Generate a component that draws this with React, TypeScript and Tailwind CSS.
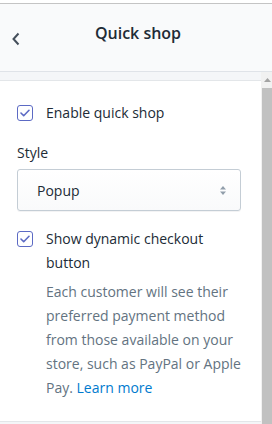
import { useState } from 'react';

const Check = ({ checked, onClick }: { checked: boolean; onClick: () => void }) => (
  <button
    onClick={onClick}
    className="w-4 h-4 shrink-0 rounded-[3px] border border-[#5c6ac4] bg-white flex items-center justify-center"
  >
    {checked && (
      <svg width="10" height="8" viewBox="0 0 10 8" fill="none">
        <path d="M1 4l2.7 2.7L9 1.3" stroke="#5c6ac4" strokeWidth="1.6" strokeLinecap="round" strokeLinejoin="round" />
      </svg>
    )}
  </button>
);

const App = () => {
  const [quickShop, setQuickShop] = useState(true);
  const [dynamicCheckout, setDynamicCheckout] = useState(true);
  const [estilo, setEstilo] = useState('Popup');

  return (
    <div className="w-[272px] h-[424px] overflow-hidden bg-[#f4f6f8] flex flex-col font-['Open_Sans',sans-serif] text-[#212b36]">
      {/* Cabecera */}
      <div className="h-[3px] bg-white" />
      <div className="h-[69px] shrink-0 bg-[#f9fafb] border-t border-[#c4c4c4] border-b border-b-[#dfe3e8] flex items-center relative">
        <button className="absolute left-[11px] top-[28px] text-[#454f5b]">
          <svg width="10" height="14" viewBox="0 0 10 14" fill="none">
            <path d="M7.5 1.5L2.5 7l5 5.5" stroke="currentColor" strokeWidth="2" />
          </svg>
        </button>
        <h1 className="w-full text-center text-[16px] font-semibold pl-[4px] -mt-[10px]">Quick shop</h1>
      </div>

      <div className="flex flex-1 min-h-0">
        {/* Contenido */}
        <div className="flex-1 pt-[8px]">
          <div className="bg-white border-t border-b border-[#e3e6e9] pl-[17px] pr-[20px] pt-[22px] pb-[21px]">
            <label className="flex items-center gap-[13px] h-[20px]">
              <Check checked={quickShop} onClick={() => setQuickShop(!quickShop)} />
              <span className="text-[14px] leading-[20px]">Enable quick shop</span>
            </label>

            <div className="mt-[20px] text-[14px] leading-[20px]">Style</div>
            <div className="mt-[6px] h-[42px] rounded-[3px] border border-[#c4cdd5] bg-gradient-to-b from-white to-[#f9fafb] shadow-[0_1px_0_rgba(22,29,37,0.05)] flex items-center pl-[19px] pr-[13px] relative">
              <span className="flex-1 text-[14px]">{estilo}</span>
              <svg width="8" height="11" viewBox="0 0 8 11" className="text-[#919eab]">
                <path d="M4 1L7 4.5H1z" fill="currentColor" />
                <path d="M4 10L1 6.5h6z" fill="currentColor" />
              </svg>
              <select
                value={estilo}
                onChange={(e) => setEstilo(e.target.value)}
                className="absolute inset-0 opacity-0"
              >
                <option>Popup</option>
                <option>Drawer</option>
              </select>
            </div>

            <div className="mt-[18px] flex gap-[13px]">
              <div className="pt-[2px]">
                <Check checked={dynamicCheckout} onClick={() => setDynamicCheckout(!dynamicCheckout)} />
              </div>
              <div className="text-[14px] leading-[24px] -mt-[2px]">
                <div>Show dynamic checkout button</div>
                <p className="text-[#637381] mt-[5px]">
                  Each customer will see their preferred payment method from those available on your store, such as PayPal or Apple Pay.{' '}
                  <a href="#" className="text-[#007ace]">Learn more</a>
                </p>
              </div>
            </div>
          </div>
        </div>

        {/* Barra de desplazamiento */}
        <div className="w-[11px] bg-[#f1f1f1] flex flex-col items-end">
          <div className="h-[16px] w-[10px] flex items-center justify-center">
            <svg width="7" height="4" viewBox="0 0 7 4">
              <path d="M3.5 0L7 4H0z" fill="#a3a3a3" />
            </svg>
          </div>
          <div className="flex-1 w-[10px] bg-[#c1c1c1]" />
        </div>
      </div>
    </div>
  );
};

export default App;
